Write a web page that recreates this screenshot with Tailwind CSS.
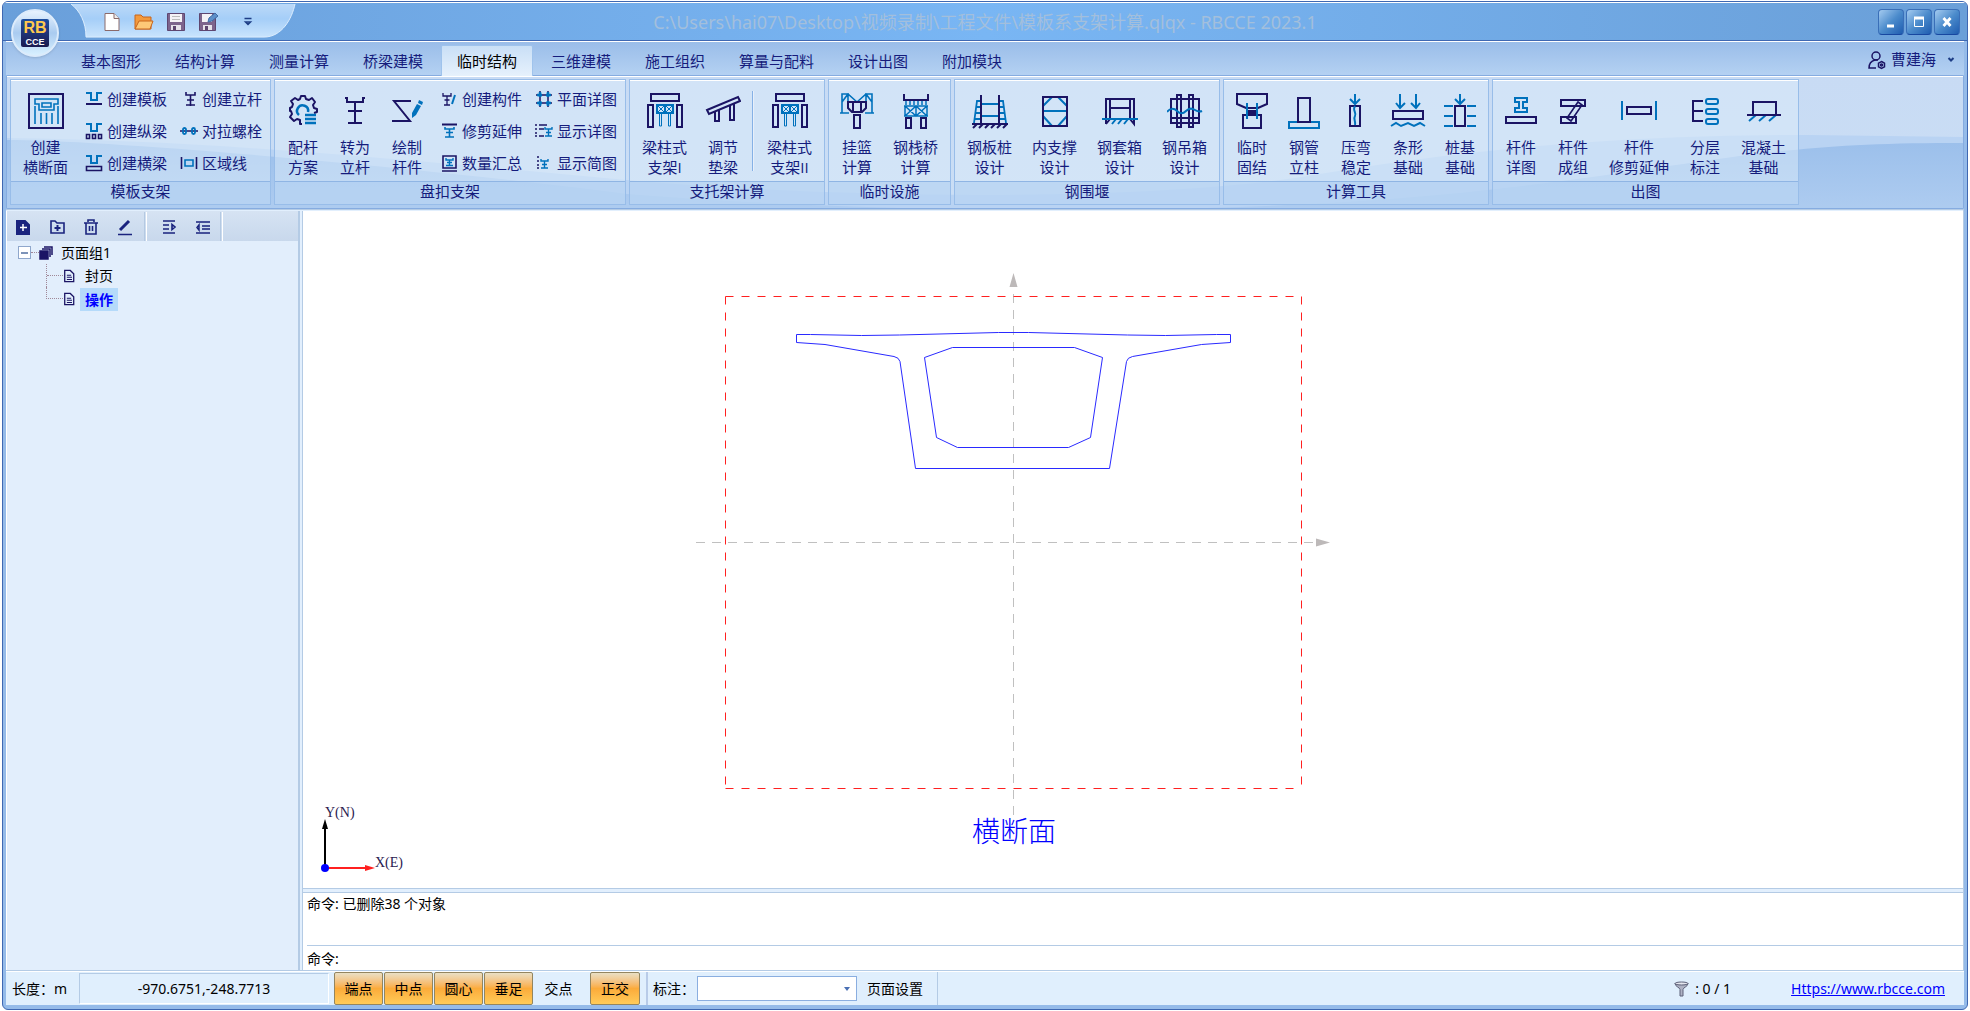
<!DOCTYPE html>
<html lang="zh-CN">
<head>
    <meta charset="UTF-8">
    <meta name="viewport" content="width=device-width, initial-scale=1.0">
    <title>RBCCE 2023.1</title>
    <script src="https://cdn.jsdelivr.net/npm/@tailwindcss/browser@4"></script>
</head>
<body class="h-screen bg-white px-[2px] pt-px pb-px font-['Noto_Sans','Noto_Sans_CJK_SC',sans-serif] text-sm text-black">

    <!-- Shared icon shapes -->
    <svg class="hidden">
        <symbol id="pier" viewBox="0 0 36 36">
            <path d="M4 1h28v7H4zM1 12h5v22H1zM30 12h5v22h-5z" />
            <g class="stroke-[#0071bc]">
                <path d="M10 12v8M18 12v8M26 12v8M9 12h18M9 20h18" />
                <path stroke-width="1" d="M10 12l8 8 8-8M10 20l8-8 8 8M12.500 21v12h2V21M21.500 21v12h2V21" />
            </g>
        </symbol>
        <symbol id="page" viewBox="0 0 14 16">
            <path d="M2 1.500h6.500l4 4v9H2z" />
            <path d="M4.500 7h5M4.500 9.500h6M4.500 12h6" stroke-width="1.200" />
        </symbol>
    </svg>

    <div class="flex h-full flex-col overflow-hidden rounded-md border border-[#3f68b2] bg-[#95bbe9]">

        <!-- Title bar -->
        <header class="relative flex h-[39px] shrink-0 items-center border-t border-b border-t-white border-b-[#3f68b2] bg-gradient-to-r from-[#6a9fda] via-[#79b6f4] to-[#6a9fd8]">
            <div class="relative ml-[67px] flex h-full w-[226px] items-center pt-px">
                <svg class="absolute inset-0 h-full w-full" viewBox="0 0 226 38" preserveAspectRatio="none">
                    <defs>
                        <linearGradient id="qat" x2="0" y2="1">
                            <stop offset="0" stop-color="#bcd9f8" />
                            <stop offset=".45" stop-color="#a5cef8" />
                            <stop offset="1" stop-color="#c9e4fd" />
                        </linearGradient>
                    </defs>
                    <path d="M1 1C10 8 16 20 16 35H194C212 35 222 16 225 1" fill="url(#qat)" stroke="#dcedfd" />
                </svg>
                <div class="relative flex items-center gap-3 pl-[32px]">
                    <button aria-label="新建">
                        <svg class="size-5" viewBox="0 0 20 20" fill="#fff" stroke="#8b6a6a"><path d="M3 1.500h9l5 5v12H3z" /><path d="M12 1.500v5h5" fill="#eee" /></svg>
                    </button>
                    <button aria-label="打开">
                        <svg class="size-5" viewBox="0 0 20 20" stroke="#c8641c"><path d="M1 3h6l2 2h8v12H1z" fill="#f39a3d" /><path d="M5 9h14l-3 8H1z" fill="#fdc877" /></svg>
                    </button>
                    <button aria-label="保存">
                        <svg class="size-5" viewBox="0 0 20 20"><path d="M1.500 1.500h17v17h-17z" fill="#7d648c" stroke="#5e4670" /><path d="M4 2h12v8H4z" fill="#f4f2f6" /><path d="M5 13h10v5H5z" fill="#e6e2ea" /><path d="M7 14h3v4H7z" fill="#5e4670" /><path d="M6 4.500h8M6 7.500h8" stroke="#bbb" /></svg>
                    </button>
                    <button aria-label="另存为">
                        <svg class="size-5" viewBox="0 0 20 20"><path d="M1.500 1.500h16v17h-16z" fill="#7d648c" stroke="#5e4670" /><path d="M4 2h10v8H4z" fill="#f4f2f6" /><path d="M5 13h9v5H5z" fill="#e6e2ea" /><path d="M7 14h3v4H7z" fill="#5e4670" /><path d="M10 10l1-4 6-5 3 3-6 5z" fill="#5d8fc9" stroke="#3f6ba5" /></svg>
                    </button>
                    <button aria-label="自定义快速访问工具栏" class="ml-3">
                        <svg class="size-3" viewBox="0 0 12 12" fill="none" stroke="#1d3d85" stroke-width="1.500"><path d="M2.500 2.500h7M3.500 6L6 8.500 8.500 6z" /></svg>
                    </button>
                </div>
            </div>

            <h1 class="absolute inset-x-0 text-center text-lg text-[#a3bfdc]">C:\Users\hai07\Desktop\视频录制\工程文件\模板系支架计算.qlqx - RBCCE 2023.1</h1>

            <div class="relative mr-[7px] ml-auto flex gap-[2px]">
                <button aria-label="最小化" class="flex size-[26px] items-center justify-center rounded-sm border border-[#3a6fb8] border-b-[#1747a0] bg-gradient-to-br from-[#a4cbf0] via-[#4c8ccc] to-[#1f5cb0]">
                    <svg class="size-4" viewBox="0 0 16 16" stroke="#fff" stroke-width="3"><path d="M4 12h7" /></svg>
                </button>
                <button aria-label="最大化" class="flex size-[26px] items-center justify-center rounded-sm border border-[#3a6fb8] border-b-[#1747a0] bg-gradient-to-br from-[#a4cbf0] via-[#4c8ccc] to-[#1f5cb0]">
                    <svg class="size-4" viewBox="0 0 16 16" fill="none" stroke="#fff"><path d="M3.500 3.500h9v9h-9z" /><path d="M3 4h10" stroke-width="3" /></svg>
                </button>
                <button aria-label="关闭" class="flex size-[26px] items-center justify-center rounded-sm border border-[#3a6fb8] border-b-[#1747a0] bg-gradient-to-br from-[#a4cbf0] via-[#4c8ccc] to-[#1f5cb0]">
                    <svg class="size-4" viewBox="0 0 16 16" stroke="#fff" stroke-width="2.800"><path d="M4.500 4l7 8M11.500 4l-7 8" /></svg>
                </button>
            </div>

            <!-- Application button -->
            <button aria-label="RBCCE" class="absolute top-[6px] left-[8px] z-10 flex size-12 items-center justify-center rounded-full border-2 border-[#dcebfb] bg-gradient-to-b from-[#e8f3fe] via-[#a9cbf0] to-[#d8f0ff] shadow-sm">
                <span class="flex size-7 flex-col items-center justify-center rounded-xs bg-gradient-to-b from-[#1d4fa0] to-[#1a1a50] font-['Liberation_Sans',sans-serif] font-bold">
                    <span class="text-base leading-[18px] text-[#ffc94d]">RB</span>
                    <span class="text-[9px] leading-[10px] text-white">CCE</span>
                </span>
            </button>
        </header>

        <!-- Ribbon tabs -->
        <nav class="mx-[3px] flex h-[34px] shrink-0 items-end border-t border-white bg-gradient-to-b from-[#9abde9] to-[#b4d1f2] pl-[58px] text-[15px] text-[#151c7c]">
            <button class="h-[27px] w-[94px]">基本图形</button>
            <button class="h-[27px] w-[94px]">结构计算</button>
            <button class="h-[27px] w-[94px]">测量计算</button>
            <button class="h-[27px] w-[94px]">桥梁建模</button>
            <button class="z-10 mx-px -mb-px h-[31px] w-[92px] rounded-t-xs border border-b-0 border-[#9fc3ec] bg-gradient-to-b from-[#c9dff6] to-[#e6f1fc] pt-[2px] text-black">临时结构</button>
            <button class="h-[27px] w-[94px]">三维建模</button>
            <button class="h-[27px] w-[94px]">施工组织</button>
            <button class="h-[27px] w-[109px]">算量与配料</button>
            <button class="h-[27px] w-[94px]">设计出图</button>
            <button class="h-[27px] w-[94px]">附加模块</button>
            <button class="mr-2 ml-auto flex h-[31px] items-center gap-1">
                <svg class="size-5" viewBox="0 0 20 20" fill="none" stroke="#1b1464" stroke-width="1.500"><circle cx="9" cy="6" r="4" /><path d="M9 18H2c0-5 2-7 6-8h3" /><path d="M14.500 11.500l3 1.700v3.600l-3 1.700-3-1.700v-3.600z" /><circle cx="14.500" cy="15" r="1" /></svg>
                曹建海
                <svg class="ml-1 size-3" viewBox="0 0 12 12" fill="none" stroke="#1d3d85" stroke-width="2"><path d="M4.500 4L7 6.500 9.500 4" /></svg>
            </button>
        </nav>

        <!-- Ribbon groups -->
        <section class="relative mx-[3px] shrink-0 rounded-xs border border-[#86ace0] font-['Open_Sans','Noto_Sans_CJK_SC',sans-serif] text-[15px] leading-5 text-[#151c7c]">
            <svg class="absolute inset-0 h-full w-full" viewBox="0 0 1956 132" preserveAspectRatio="none">
                <defs>
                    <linearGradient id="sky" x2="0" y2="1"><stop offset="0" stop-color="#c8dbf4" /><stop offset="1" stop-color="#cadef5" /></linearGradient>
                    <linearGradient id="wave" x2="0" y2="1"><stop offset="0" stop-color="#9bbfeb" /><stop offset="1" stop-color="#aeccf0" /></linearGradient>
                </defs>
                <path d="M0 0h1956v132H0z" fill="url(#sky)" />
                <path d="M0 62C200 64 400 84 620 104S1150 125 1300 100S1600 59 1800 59L1956 61V132H0z" fill="#b9d3f3" />
                <path d="M0 64C100 64 400 90 620 118C900 140 1250 140 1480 114S1760 66 1956 67V132H0z" fill="url(#wave)" />
                <path d="M0 .5h1956" stroke="#fff" />
            </svg>
            <div class="relative flex gap-[3px] px-[3px] pt-[3px] pb-[3px] fill-none stroke-[#1b1464] stroke-2 [&_button]:shrink-0">

                <div class="flex flex-col border border-[#98bde9] bg-[#dbebfa]/50">
                    <div class="flex h-[101px] border-t border-white px-[2px]">
                        <button class="flex w-[65px] flex-col items-center pt-3">
                            <svg class="mb-2 size-9" viewBox="0 0 36 36"><path d="M1 1h34v34H1z" /><path class="stroke-[#0071bc]" d="M7 6h23v5h-4v6H11v-6H7zM14 10h9v4h-9zM7 13v18M13 20v11M18.500 20v11M24 20v11M30 13v18" stroke-width="1.600" /></svg>
                            <span>创建</span><span>横断面</span>
                        </button>
                        <div class="grid grid-cols-2 pt-[2px] pb-[2px]">
                            <button class="flex w-[95px] items-center gap-1 pl-[7px]"><svg class="size-[18px]" viewBox="0 0 18 18"><path class="stroke-[#0071bc]" d="M1 3h5v7h6V3h5" /><path d="M1 14h16" /></svg>创建模板</button>
                            <button class="flex w-[95px] items-center gap-1 pl-[7px]"><svg class="size-[18px]" viewBox="0 0 18 18"><path d="M6 2v3h9V2M10.500 5v11M7 10h7M6 15h9" stroke-width="1.600" /></svg>创建立杆</button>
                            <button class="flex w-[95px] items-center gap-1 pl-[7px]"><svg class="size-[18px]" viewBox="0 0 18 18"><path class="stroke-[#0071bc]" d="M1 2h5v7h6V2h5" /><path d="M1.500 12.500h3v4h-3zM7.500 12.500h3v4h-3zM13.500 12.500h3v4h-3z" stroke-width="1.600" /></svg>创建纵梁</button>
                            <button class="flex w-[95px] items-center gap-1 pl-[7px]"><svg class="size-[18px]" viewBox="0 0 18 18"><path d="M0 9h18" stroke-width="1.600" /><g class="stroke-[#0071bc]" stroke-width="1.800"><rect x="3" y="6" width="3" height="6" rx="1.500" /><rect x="12" y="6" width="3" height="6" rx="1.500" /></g></svg>对拉螺栓</button>
                            <button class="flex w-[95px] items-center gap-1 pl-[7px]"><svg class="size-[18px]" viewBox="0 0 18 18"><path class="stroke-[#0071bc]" d="M1 2h5v7h6V2h5" /><path d="M1.500 12.500h15v4h-15z" stroke-width="1.600" /></svg>创建横梁</button>
                            <button class="flex w-[95px] items-center gap-1 pl-[7px]"><svg class="size-[18px]" viewBox="0 0 18 18"><path d="M1.500 3v12M16.500 3v12" stroke-width="1.600" /><path class="stroke-[#0071bc]" d="M5 6h8v6H5z" stroke-width="1.600" /></svg>区域线</button>
                        </div>
                    </div>
                    <div class="h-[23px] border-t border-[#8fb5e4] bg-[#a8c9f0]/50 text-center leading-[18px]">模板支架</div>
                </div>

                <div class="flex flex-col border border-[#98bde9] bg-[#dbebfa]/50">
                    <div class="flex h-[101px] border-t border-white px-[2px]">
                        <button class="flex w-[52px] flex-col items-center pt-3">
                            <svg class="mb-2 size-9" viewBox="0 0 36 36"><path stroke-linejoin="round" d="M17 31h-2v-4l-3-1-3 2-4-4 2-3-1-3H5v-3l2-1 1-3-2-3 4-3 3 2 2-1 1-3h4l1 3 3 1 3-2 3 4-2 3 1 3 3 1v3l-3 1" /><path class="stroke-[#0071bc]" stroke-width="2.500" d="M14 22a5.500 5.500 0 1 1 9-3M20 22h11M20 26h11M20 30h11" /></svg>
                            <span>配杆</span><span>方案</span>
                        </button>
                        <button class="flex w-[52px] flex-col items-center pt-3">
                            <svg class="mb-2 size-9" viewBox="0 0 36 36"><path d="M8 5h2v4h16V5h2M18 9v21M11 18h14M11 30h14" /></svg>
                            <span>转为</span><span>立杆</span>
                        </button>
                        <button class="flex w-[52px] flex-col items-center pt-3">
                            <svg class="mb-2 size-9" viewBox="0 0 36 36"><path d="M22 8H5l16 20H3" /><path class="fill-[#0071bc] stroke-none" d="M30 7l4 2-1 3-4-2zM28 11l4 2-5 9-4 3v-5z" /></svg>
                            <span>绘制</span><span>杆件</span>
                        </button>
                        <div class="grid grid-cols-2 pt-[2px] pb-[2px]">
                            <button class="flex w-[95px] items-center gap-1 pl-[7px]"><svg class="size-[18px]" viewBox="0 0 18 18"><path d="M3 3v3h8V3M7 6v9M4.500 10h5M4 15h6" stroke-width="1.300" /><path class="stroke-[#0071bc]" d="M15 5l-3 9" /></svg>创建构件</button>
                            <button class="flex w-[95px] items-center gap-1 pl-[7px]"><svg class="size-[18px]" viewBox="0 0 18 18"><path d="M1 5h16M1 13h16M5 1v16M13 1v16" stroke-width="1.500" /><path class="stroke-[#0071bc]" d="M5 2v5M2 5h5M13 2v5M11 5h5M5 11v5M2 13h5M13 11v5M11 13h5" stroke-width="2.500" /></svg>平面详图</button>
                            <button class="flex w-[95px] items-center gap-1 pl-[7px]"><svg class="size-[18px]" viewBox="0 0 18 18"><path d="M2 2.500h15" /><path class="stroke-[#0071bc]" d="M5 5v2h9V5M9.500 7v8M6 10.500h7M5 15h9" stroke-width="1.600" /></svg>修剪延伸</button>
                            <button class="flex w-[95px] items-center gap-1 pl-[7px]"><svg class="size-[18px]" viewBox="0 0 18 18"><path d="M0 3h2M4 3h8M0 7h2M4 7h5M0 11h2M0 14h2M4 14h5" stroke-width="1.600" /><path class="stroke-[#0071bc]" d="M10 5v2h7V5M13.500 7v7M11 10.500h5M10 14h7" stroke-width="1.400" /></svg>显示详图</button>
                            <button class="flex w-[95px] items-center gap-1 pl-[7px]"><svg class="size-[18px]" viewBox="0 0 18 18"><path d="M3 2h13v12H3zM2 17h15" stroke-width="1.600" /><path class="stroke-[#0071bc]" d="M6 4v2h7V4M9.500 6v6M7 8.500h5M6 11.500h7" stroke-width="1.400" /></svg>数量汇总</button>
                            <button class="flex w-[95px] items-center gap-1 pl-[7px]"><svg class="size-[18px]" viewBox="0 0 18 18"><path d="M2 3h2M2 7h2M2 11h2M2 14h2" stroke-width="1.600" /><path class="stroke-[#0071bc]" d="M6 5v2h7V5M9.500 7v7M7 10.500h5M6 14h7" stroke-width="1.400" /></svg>显示简图</button>
                        </div>
                    </div>
                    <div class="h-[23px] border-t border-[#8fb5e4] bg-[#a8c9f0]/50 text-center leading-[18px]">盘扣支架</div>
                </div>

                <div class="flex flex-col border border-[#98bde9] bg-[#dbebfa]/50">
                    <div class="flex h-[101px] border-t border-white px-[2px]">
                        <button class="flex w-[65px] flex-col items-center pt-3">
                            <svg class="mb-2 size-9"><use href="#pier" /></svg>
                            <span>梁柱式</span><span>支架I</span>
                        </button>
                        <button class="flex w-[52px] flex-col items-center pt-3">
                            <svg class="mb-2 size-9" viewBox="0 0 36 36"><path d="M2 17L33 4l2 4L4 21zM10 19v9h4V17M25 13v14h4V11" /></svg>
                            <span>调节</span><span>垫梁</span>
                        </button>
                        <div class="mx-[3px] mt-[10px] h-20 w-[2px] border-r border-white/80 bg-[#85b1e6]"></div>
                        <button class="flex w-[65px] flex-col items-center pt-3">
                            <svg class="mb-2 size-9"><use href="#pier" /></svg>
                            <span>梁柱式</span><span>支架II</span>
                        </button>
                    </div>
                    <div class="h-[23px] border-t border-[#8fb5e4] bg-[#a8c9f0]/50 text-center leading-[18px]">支托架计算</div>
                </div>

                <div class="flex flex-col border border-[#98bde9] bg-[#dbebfa]/50">
                    <div class="flex h-[101px] border-t border-white px-[2px]">
                        <button class="flex w-[52px] flex-col items-center pt-3">
                            <svg class="mb-2 size-9" viewBox="0 0 36 36"><path class="stroke-[#0071bc]" d="M1 20h9M26 20h9M3 20V1h6l9 8 9-8h6v19M3 9l6-8v8M33 9l-6-8v8" stroke-width="1.600" /><path d="M9 9h18v6l-4 4H13l-4-4zM14 9v10M22 9v10M15 22h6v13h-6z" /></svg>
                            <span>挂篮</span><span>计算</span>
                        </button>
                        <button class="flex w-[65px] flex-col items-center pt-3">
                            <svg class="mb-2 size-9" viewBox="0 0 36 36"><path d="M6 1v6h24V1M8 25h5v10H8zM23 25h5v10h-5z" /><path class="stroke-[#0071bc]" d="M6 13h24M6 23h24M8 8v4M12 8v4M16 8v4M20 8v4M24 8v4M28 8v4M7 13v10M18 13v10M29 13v10M7 13l11 10 11-10M7 23l11-10 11 10" stroke-width="1.500" /></svg>
                            <span>钢栈桥</span><span>计算</span>
                        </button>
                    </div>
                    <div class="h-[23px] border-t border-[#8fb5e4] bg-[#a8c9f0]/50 text-center leading-[18px]">临时设施</div>
                </div>

                <div class="flex flex-col border border-[#98bde9] bg-[#dbebfa]/50">
                    <div class="flex h-[101px] border-t border-white px-[2px]">
                        <button class="flex w-[65px] flex-col items-center pt-3">
                            <svg class="mb-2 size-9" viewBox="0 0 36 36"><path class="stroke-[#0071bc]" d="M9 11h18M9 23h18M8 8H5L2 30M4 14h4M3 20h5M3 26h5M28 8h3l3 22M28 14h4M28 20h5M28 26h5" stroke-width="1.800" /><path d="M9 2v28M27 2v28M0 31h36M5 31l-4 4M11 31l-4 4M17 31l-4 4M23 31l-4 4M29 31l-4 4M35 31l-4 4" /></svg>
                            <span>钢板桩</span><span>设计</span>
                        </button>
                        <button class="flex w-[65px] flex-col items-center pt-3">
                            <svg class="mb-2 size-9" viewBox="0 0 36 36"><path class="stroke-[#0071bc]" d="M6 18h24M6 13l9-9M30 13l-9-9M6 23l9 10M30 23l-9 10" /><path d="M6 4h24v29H6z" /></svg>
                            <span>内支撑</span><span>设计</span>
                        </button>
                        <button class="flex w-[65px] flex-col items-center pt-3">
                            <svg class="mb-2 size-9" viewBox="0 0 36 36"><path d="M4 31V6h28v25l-4-5V6M4 31l4-5V6M8 15h20" /><path class="stroke-[#0071bc]" d="M0 26h36M14 26l-4 5M20 26l-4 5M26 26l-4 5" /></svg>
                            <span>钢套箱</span><span>设计</span>
                        </button>
                        <button class="flex w-[65px] flex-col items-center pt-3">
                            <svg class="mb-2 size-9" viewBox="0 0 36 36"><path d="M4 6h28v24H4zM4 25h28M10 2h4v32h-4zM22 2h4v32h-4z" /><path class="stroke-[#0071bc]" d="M0 19c3-4 7-4 10-1s6 3 9 0 6-3 9-1 5 2 7 1" /></svg>
                            <span>钢吊箱</span><span>设计</span>
                        </button>
                    </div>
                    <div class="h-[23px] border-t border-[#8fb5e4] bg-[#a8c9f0]/50 text-center leading-[18px]">钢围堰</div>
                </div>

                <div class="flex flex-col border border-[#98bde9] bg-[#dbebfa]/50">
                    <div class="flex h-[101px] border-t border-white px-[2px]">
                        <button class="flex w-[52px] flex-col items-center pt-3">
                            <svg class="mb-2 size-9" viewBox="0 0 36 36"><path d="M3 1h30v10l-9 4H12l-9-4zM9 22h18v13H9z" /><path class="fill-[#1b1464]" d="M15 18h6v3h-6z" /><path class="stroke-[#0071bc]" d="M13 10v16M23 10v16" /></svg>
                            <span>临时</span><span>固结</span>
                        </button>
                        <button class="flex w-[52px] flex-col items-center pt-3">
                            <svg class="mb-2 size-9" viewBox="0 0 36 36"><path class="stroke-[#0071bc]" d="M3 29h30v6H3z" /><path d="M12 5h12v24H12z" /></svg>
                            <span>钢管</span><span>立柱</span>
                        </button>
                        <button class="flex w-[52px] flex-col items-center pt-3">
                            <svg class="mb-2 size-9" viewBox="0 0 36 36"><path d="M12 13h10v20H12z" /><path class="stroke-[#0071bc]" d="M17 1v10M12 6l5 5 5-5M17 13c-3 4 2 7 0 10s1 5 0 9" /></svg>
                            <span>压弯</span><span>稳定</span>
                        </button>
                        <button class="flex w-[52px] flex-col items-center pt-3">
                            <svg class="mb-2 size-9" viewBox="0 0 36 36"><path d="M3 18h30v8H3z" /><path class="stroke-[#0071bc]" d="M10 1v14M6 10l4 5 5-5M26 1v14M21 10l5 5 4-5M1 33l5-3 5 3 7-3 6 3 6-3 5 3" /></svg>
                            <span>条形</span><span>基础</span>
                        </button>
                        <button class="flex w-[52px] flex-col items-center pt-3">
                            <svg class="mb-2 size-9" viewBox="0 0 36 36"><path d="M13 13h10v20H13z" /><path class="stroke-[#0071bc]" d="M18 1v10M13 6l5 5 5-5M2 13h9M2 23h9M2 33h9M25 13h9M25 23h9M25 33h9" /></svg>
                            <span>桩基</span><span>基础</span>
                        </button>
                    </div>
                    <div class="h-[23px] border-t border-[#8fb5e4] bg-[#a8c9f0]/50 text-center leading-[18px]">计算工具</div>
                </div>

                <div class="flex flex-col border border-[#98bde9] bg-[#dbebfa]/50">
                    <div class="flex h-[101px] border-t border-white px-[2px]">
                        <button class="flex w-[52px] flex-col items-center pt-3">
                            <svg class="mb-2 size-9" viewBox="0 0 36 36"><path d="M3 24h30v6H3z" /><path class="stroke-[#0071bc]" d="M12 5h12v4h-4v6h4v4H12v-4h4V9h-4z" /></svg>
                            <span>杆件</span><span>详图</span>
                        </button>
                        <button class="flex w-[52px] flex-col items-center pt-3">
                            <svg class="mb-2 size-9" viewBox="0 0 36 36"><path d="M6 7h24v6H6zM6 24h15v6H6z" /><path d="M23 9l4 3-11 16-4-3z" stroke-width="1.600" /></svg>
                            <span>杆件</span><span>成组</span>
                        </button>
                        <button class="flex w-[80px] flex-col items-center pt-3">
                            <svg class="mb-2 size-9" viewBox="0 0 36 36"><path class="stroke-[#0071bc]" d="M1 8v19M35 8v19" /><path d="M6 14h24v7H6z" /></svg>
                            <span>杆件</span><span>修剪延伸</span>
                        </button>
                        <button class="flex w-[52px] flex-col items-center pt-3">
                            <svg class="mb-2 size-9" viewBox="0 0 36 36"><path d="M16 8H6v20h10M6 18h10" /><g class="stroke-[#0071bc]"><rect x="19" y="6" width="12" height="5" rx="2" /><rect x="19" y="16" width="12" height="5" rx="2" /><rect x="19" y="26" width="12" height="5" rx="2" /></g></svg>
                            <span>分层</span><span>标注</span>
                        </button>
                        <button class="flex w-[65px] flex-col items-center pt-3">
                            <svg class="mb-2 size-9" viewBox="0 0 36 36"><path class="stroke-[#0071bc]" d="M10 22l-7 6M20 22l-7 6M30 22l-7 6" /><path d="M7 9h23v13H7zM1 22h34" /></svg>
                            <span>混凝土</span><span>基础</span>
                        </button>
                    </div>
                    <div class="h-[23px] border-t border-[#8fb5e4] bg-[#a8c9f0]/50 text-center leading-[18px]">出图</div>
                </div>
            </div>
        </section>

        <!-- Work area -->
        <main class="mx-[3px] flex min-h-0 flex-1 border-t border-r border-b border-[#b4cbe5] bg-[#e2effd] pt-px">

            <aside class="flex w-[294px] shrink-0 flex-col border-r-2 border-l border-r-[#b4cbe5] border-l-white bg-[#e2eefc]">
                <div class="flex h-[30px] shrink-0 items-center gap-4 bg-gradient-to-b from-[#d6e3f3] to-[#c8d8ec] pt-px pl-[7px] fill-none stroke-[#1a237e] stroke-2">
                    <button aria-label="新建页面"><svg class="size-[18px]" viewBox="0 0 18 18"><path class="fill-[#1a237e]" d="M3 3h8l4 4v9H3z" /><path d="M9 6v7M6 9.500h7" stroke="#fff" stroke-width="1.500" /></svg></button>
                    <button aria-label="新建组"><svg class="size-[18px]" viewBox="0 0 18 18"><path d="M3 3h4l2 2h7v10H3z" stroke-width="1.600" /><path d="M9.500 7v6M6.500 10h6" /></svg></button>
                    <button aria-label="删除"><svg class="size-[18px]" viewBox="0 0 18 18"><path d="M2 5h14M6 4V2h6v2M4 5v11h10V5M7.500 8v5M10.500 8v5" stroke-width="1.600" /></svg></button>
                    <button aria-label="编辑"><svg class="size-[18px]" viewBox="0 0 18 18"><path d="M2 16.500h14" stroke-width="1.500" /><path d="M4 12l9-9" stroke-width="3" /></svg></button>
                    <div class="-mr-[3px] -ml-[6px] h-full w-[3px] border-x border-l-[#b4c9e2] border-r-white"></div>
                    <button aria-label="展开"><svg class="size-[18px]" viewBox="0 0 18 18"><path d="M3 3h12M3 7h6M3 11h6M3 15h12M12 6.500v5l3-2.500z" stroke-width="1.600" /></svg></button>
                    <button aria-label="折叠"><svg class="size-[18px]" viewBox="0 0 18 18"><path d="M2 4h14M8 8h8M8 11h8M2 15h14M5 7v5L3 9.500z" stroke-width="1.500" /></svg></button>
                    <div class="-ml-2 h-full w-[3px] border-x border-l-[#b4c9e2] border-r-white"></div>
                </div>
                <ul class="pl-[11px] leading-[23px]">
                    <li>
                        <div class="flex items-center">
                            <button aria-label="折叠页面组1" class="flex size-[13px] items-center justify-center border border-[#8fa7cc] bg-white"><span class="h-[2px] w-[7px] bg-[#7d93b8]"></span></button>
                            <span class="w-2 border-t border-dotted border-[#a08898]"></span>
                            <svg class="mr-2 size-[14px]" viewBox="0 0 14 14" fill="none" stroke="#1b1464" stroke-width="1.500"><path d="M1 5h8v8H1z" fill="#1b1464" /><path d="M3 3h8v8M5 1h8v8" /></svg>
                            页面组1
                        </div>
                        <ul class="ml-7 border-l border-dotted border-[#a08898]">
                            <li class="flex items-center">
                                <span class="w-4 border-t border-dotted border-[#a08898]"></span>
                                <svg class="h-[14px] w-3 fill-none stroke-[#1b1464] stroke-[1.5px]"><use href="#page" /></svg>
                                <span class="ml-[5px] px-[5px]">封页</span>
                            </li>
                            <li class="-ml-px flex items-center bg-[#e2eefc]">
                                <span class="mb-3 h-3 w-[17px] border-b border-l border-dotted border-[#a08898]"></span>
                                <svg class="h-[14px] w-3 fill-none stroke-[#1b1464] stroke-[1.5px]"><use href="#page" /></svg>
                                <span class="ml-[5px] bg-[#b5dafa] px-[5px] font-bold text-[#0000ff]">操作</span>
                            </li>
                        </ul>
                    </li>
                </ul>
            </aside>

            <div class="ml-[2px] flex min-w-0 flex-1 flex-col border-l border-[#b4cbe5]">

                <!-- Drawing canvas -->
                <div class="min-h-0 flex-1 border-b border-[#b4cbe5] bg-white">
                    <svg class="h-full w-full fill-none">
                        <g stroke="#c0c0c0">
                            <path d="M710.500 83V608" stroke-dasharray="9 7" />
                            <path d="M393 331.500h620" stroke-dasharray="9 7" />
                        </g>
                        <path d="M710.500 62l4 14h-8zM1027 331.500l-14-4v8z" fill="#bdb9b9" />
                        <path d="M422.500 85.500H998.500" stroke="#ff2020" stroke-dasharray="8 8" />
                        <path d="M422.500 577.500H998.500" stroke="#ff2020" stroke-dasharray="8 8" />
                        <path d="M998.500 85.500V577.500" stroke="#ff2020" stroke-dasharray="8 8" />
                        <path d="M422.500 85.500V577.500" stroke="#ff2020" stroke-dasharray="8 8" />
                        <g stroke="#2a2aff">
                            <path d="M493.500 123.500h14l51 1 38-.5 99-2.500h30l99 2.500 38 .5 51-1h14v8l-29 2-69 12q-5 1-6 5l-17 107h-194L597 150.500q-1-4-6-5l-69-12-28.500-2z" />
                            <path d="M649.500 136.500h122l28 10-12 80-22 10h-111l-21-10-12-80z" />
                        </g>
                        <text x="711" y="631" text-anchor="middle" class="fill-[#0000ff] font-['Noto_Sans_CJK_SC',sans-serif] text-[28px] font-light">横断面</text>

                        <path d="M22 657V618" stroke="#000" stroke-width="2" />
                        <path d="M22 608l3 10h-6z" fill="#000" />
                        <path d="M22 657h40" stroke="#ff2020" stroke-width="2" />
                        <path d="M72 657l-10-3v6z" fill="#ff2020" />
                        <circle cx="22" cy="657" r="4" fill="#0000ff" />
                        <g class="fill-[#2a2050] font-['Liberation_Serif',serif] text-sm">
                            <text x="22" y="606">Y(N)</text>
                            <text x="72" y="656">X(E)</text>
                        </g>
                    </svg>
                </div>

                <!-- Command line -->
                <div class="mt-[3px] flex h-[78px] shrink-0 flex-col border-t border-[#b4cbe5] bg-white pl-1">
                    <div class="h-[53px] border-b border-[#b4cbe5] leading-[22px]">命令: 已删除38 个对象</div>
                    <div class="flex flex-1 items-center gap-1 pt-px">
                        <label for="command" class="leading-5">命令:</label>
                        <input id="command" type="text" class="h-5 min-w-0 flex-1 bg-transparent outline-none">
                    </div>
                </div>
            </div>
        </main>

        <!-- Status bar -->
        <footer class="mx-[3px] mb-1 flex h-[34px] shrink-0 items-center border-t border-white bg-[#e0effd]">
            <span class="w-[73px] pl-[6px]">长度：m</span>
            <span class="flex h-[31px] w-[250px] items-center justify-center border border-t-[#b4cbe5] border-r-white border-b-white border-l-[#b4cbe5]">-970.6751,-248.7713</span>
            <div class="ml-[5px] flex h-full gap-px">
                <button class="w-[49px] rounded-xs border border-[#93855f] bg-gradient-to-b from-[#e9dfc4] via-[#fbab3a] via-50% to-[#ffcb58]">端点</button>
                <button class="w-[49px] rounded-xs border border-[#93855f] bg-gradient-to-b from-[#e9dfc4] via-[#fbab3a] via-50% to-[#ffcb58]">中点</button>
                <button class="w-[49px] rounded-xs border border-[#93855f] bg-gradient-to-b from-[#e9dfc4] via-[#fbab3a] via-50% to-[#ffcb58]">圆心</button>
                <button class="w-[49px] rounded-xs border border-[#93855f] bg-gradient-to-b from-[#e9dfc4] via-[#fbab3a] via-50% to-[#ffcb58]">垂足</button>
                <button class="w-[49px]">交点</button>
            </div>
            <button class="ml-[7px] h-full w-[50px] rounded-xs border border-[#93855f] bg-gradient-to-b from-[#e9dfc4] via-[#fbab3a] via-50% to-[#ffcb58]">正交</button>
            <span class="mr-[5px] ml-[6px] h-full w-[2px] bg-[#b8cbe8]"></span>
            <label for="dimension" class="w-[44px]">标注：</label>
            <div class="relative">
                <select id="dimension" class="h-[25px] w-[160px] appearance-none border border-[#8aaee0] bg-white"><option></option></select>
                <svg class="pointer-events-none absolute top-[9px] right-[6px] size-2" viewBox="0 0 8 8" fill="#4a70b4"><path d="M1 2h6L4 6z" /></svg>
            </div>
            <button class="ml-[10px]">页面设置</button>
            <span class="ml-[14px] h-full w-px bg-[#b4cbe5]"></span>
            <div class="ml-auto flex items-center gap-[5px]">
                <svg class="size-4" viewBox="0 0 16 16" fill="#aeb2c4" stroke="#5c6078"><path d="M1 2.500c0 3 5 4 5 6V15h3V8.500c0-2 5-3 5-6z" /><ellipse cx="7.500" cy="2.500" rx="6.500" ry="1.500" fill="#e4e6ee" /></svg>
                : 0 / 1
            </div>
            <a href="Https://www.rbcce.com" class="mr-[19px] ml-[60px] text-[#0000ff] underline">Https://www.rbcce.com</a>
        </footer>
    </div>
</body>
</html>
